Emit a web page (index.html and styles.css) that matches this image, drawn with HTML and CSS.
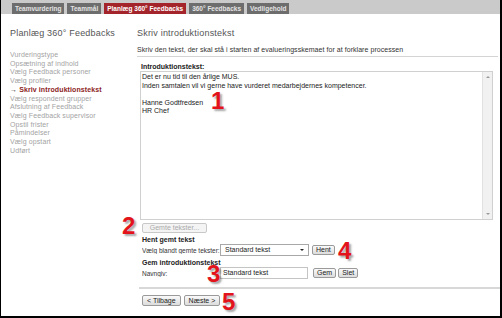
FILE: index.html
```html
<!DOCTYPE html>
<html>
<head>
    <title>Planlæg 360° Feedbacks</title>
    <link rel="stylesheet" href="styles.css">
</head>
<body>
    <div class="frame">
        <div class="topbar">
            <span class="tab">Teamvurdering</span>
            <span class="tab">Teammål</span>
            <span class="tab active">Planlæg 360° Feedbacks</span>
            <span class="tab">360° Feedbacks</span>
            <span class="tab">Vedligehold</span>
        </div>

        <div class="main">
            <div class="sidebar">
                <h2 class="page-title">Planlæg 360° Feedbacks</h2>
                <ul class="steps">
                    <li>Vurderingstype</li>
                    <li>Opsætning af indhold</li>
                    <li>Vælg Feedback personer</li>
                    <li>Vælg profiler</li>
                    <li class="current"><span class="arrow">&rarr;</span> Skriv introduktionstekst</li>
                    <li>Vælg respondent grupper</li>
                    <li>Afslutning af Feedback</li>
                    <li>Vælg Feedback supervisor</li>
                    <li>Opstil frister</li>
                    <li>Påmindelser</li>
                    <li>Vælg opstart</li>
                    <li>Udført</li>
                </ul>
            </div>

            <div class="content">
                <h2 class="page-title">Skriv introduktionstekst</h2>
                <p class="intro">Skriv den tekst, der skal stå i starten af evalueringsskemaet for at forklare processen</p>

                <div class="field-label">Introduktionstekst:</div>
                <div class="textbox">
                    <div class="textbox-text">
                        Det er nu tid til den årlige MUS.<br>
                        Inden samtalen vil vi gerne have vurderet medarbejdernes kompetencer.<br>
                        <br>
                        Hanne Godtfredsen<br>
                        HR Chef
                    </div>
                    <div class="scrollbar">
                        <span class="scroll-arrow up"></span>
                        <span class="scroll-arrow down"></span>
                    </div>
                </div>

                <button class="btn saved" disabled>Gemte tekster...</button>

                <div class="section-title">Hent gemt tekst</div>
                <div class="form-row">
                    <span class="row-label">Vælg blandt gemte tekster:</span>
                    <div class="select">Standard tekst<span class="caret"></span></div>
                    <button class="btn">Hent</button>
                </div>

                <div class="section-title">Gem introduktionstekst</div>
                <div class="form-row">
                    <span class="row-label">Navngiv:</span>
                    <div class="input">Standard tekst</div>
                    <button class="btn">Gem</button>
                    <button class="btn">Slet</button>
                </div>

                <div class="nav-buttons">
                    <button class="btn">&lt; Tilbage</button>
                    <button class="btn">Næste &gt;</button>
                </div>
            </div>
        </div>

        <span class="marker m1">1</span>
        <span class="marker m2">2</span>
        <span class="marker m3">3</span>
        <span class="marker m4">4</span>
        <span class="marker m5">5</span>
    </div>
</body>
</html>
```

FILE: styles.css
```css
body {
    margin: 0;
    padding: 0;
    font-family: "Liberation Sans", Arial, sans-serif;
    background-color: #fff;
}

.frame {
    position: relative;
    width: 502px;
    height: 318px;
    box-sizing: border-box;
    border-left: 1px solid #000;
    border-right: 2px solid #000;
    border-bottom: 2px solid #000;
    overflow: hidden;
    background-color: #fff;
}

/* top tabs */
.topbar {
    height: 14px;
    box-sizing: border-box;
    background-color: #cacaca;
    padding: 3px 0 0 11px;
    display: flex;
    gap: 3px;
}

.tab {
    height: 11px;
    line-height: 11px;
    padding: 0 3px;
    background-color: #6d6d6d;
    color: #e4e4e4;
    font-size: 6.5px;
    font-weight: bold;
    white-space: nowrap;
}

.tab.active {
    background-color: #a3252b;
    color: #fff;
}

.main {
    display: flex;
}

.page-title {
    margin: 13px 0 0 0;
    font-size: 9px;
    line-height: 12px;
    font-weight: normal;
    color: #555;
    letter-spacing: 0.2px;
    white-space: nowrap;
}

/* left steps */
.sidebar {
    width: 127px;
    padding-left: 9px;
}

.steps {
    list-style: none;
    margin: 12px 0 0 0;
    padding: 0;
}

.steps li {
    font-size: 7px;
    line-height: 8.7px;
    color: #a3a3a3;
    letter-spacing: 0.1px;
    white-space: nowrap;
}

.steps li.current {
    color: #8c1d23;
    font-weight: bold;
}

.steps .arrow {
    color: #333;
}

/* right content */
.content {
    flex: 1;
}

.intro {
    margin: 6px 2px 0 0;
    padding-bottom: 2px;
    border-bottom: 1px solid #d4d4d4;
    font-size: 7px;
    line-height: 9px;
    color: #333;
    letter-spacing: 0.05px;
    white-space: nowrap;
}

.field-label {
    margin: 5px 0 0 4px;
    font-size: 7px;
    line-height: 9px;
    font-weight: bold;
    color: #222;
}

.textbox {
    margin: 0 7px 0 3px;
    height: 149px;
    box-sizing: border-box;
    border: 1px solid #d0d0d0;
    display: flex;
}

.textbox-text {
    flex: 1;
    padding: 1px 1px;
    font-size: 7px;
    line-height: 8.6px;
    color: #222;
}

.scrollbar {
    width: 9px;
    background-color: #f1f1f1;
    border-left: 1px solid #e2e2e2;
    display: flex;
    flex-direction: column;
    justify-content: space-between;
    align-items: center;
    padding: 4px 0;
}

.scroll-arrow {
    width: 0;
    height: 0;
    border-left: 2px solid transparent;
    border-right: 2px solid transparent;
}

.scroll-arrow.up {
    border-bottom: 2px solid #999;
}

.scroll-arrow.down {
    border-top: 2px solid #999;
}

.btn {
    font-family: "Liberation Sans", Arial, sans-serif;
    font-size: 7px;
    height: 10px;
    line-height: 8px;
    padding: 0 3px;
    border: 1px solid #9a9a9a;
    border-radius: 2px;
    background: linear-gradient(#fafafa, #dcdcdc);
    color: #222;
    box-sizing: border-box;
}

.btn.saved {
    display: block;
    margin: 3px 0 0 5px;
    width: 65px;
    height: 10px;
    border-color: #c8c8c8;
    background: #f4f4f4;
    color: #aaa;
}

.section-title {
    margin: 3px 0 0 5px;
    font-size: 7px;
    line-height: 8px;
    font-weight: bold;
    color: #222;
}

.form-row {
    display: flex;
    align-items: center;
    margin-left: 5px;
    height: 12px;
}

.row-label {
    width: 78px;
    flex-shrink: 0;
    font-size: 6.5px;
    color: #333;
    white-space: nowrap;
    overflow: hidden;
}

.select {
    position: relative;
    width: 89px;
    height: 12px;
    box-sizing: border-box;
    border: 1px solid #a8a8a8;
    padding-left: 4px;
    font-size: 7px;
    line-height: 10px;
    color: #222;
    margin-right: 3px;
}

.caret {
    position: absolute;
    right: 4px;
    top: 4px;
    width: 0;
    height: 0;
    border-left: 2px solid transparent;
    border-right: 2px solid transparent;
    border-top: 2px solid #222;
}

.input {
    width: 88px;
    height: 12px;
    box-sizing: border-box;
    border: 1px solid #c4c4c4;
    padding-left: 2px;
    font-size: 7px;
    line-height: 10px;
    color: #222;
    margin-right: 5px;
}

.form-row + .section-title {
    margin-top: 3px;
}

.form-row .btn + .btn {
    margin-left: 2px;
}

.nav-buttons {
    margin-top: 8px;
    margin-left: 2px;
    padding: 6px 0 0 3px;
    border-top: 2px solid #d8d8d8;
    display: flex;
    gap: 3px;
}

.nav-buttons .btn {
    height: 11px;
    padding: 0 4px;
}

/* red annotation numbers */
.marker {
    position: absolute;
    font-size: 24px;
    line-height: 24px;
    font-weight: bold;
    color: #e3131b;
    text-shadow: 2px 2px 2px rgba(0, 0, 0, 0.35);
}

.m1 { left: 210px; top: 89px; }
.m2 { left: 121px; top: 214px; }
.m3 { left: 206px; top: 262px; }
.m4 { left: 337px; top: 239px; }
.m5 { left: 221px; top: 290px; }
```
